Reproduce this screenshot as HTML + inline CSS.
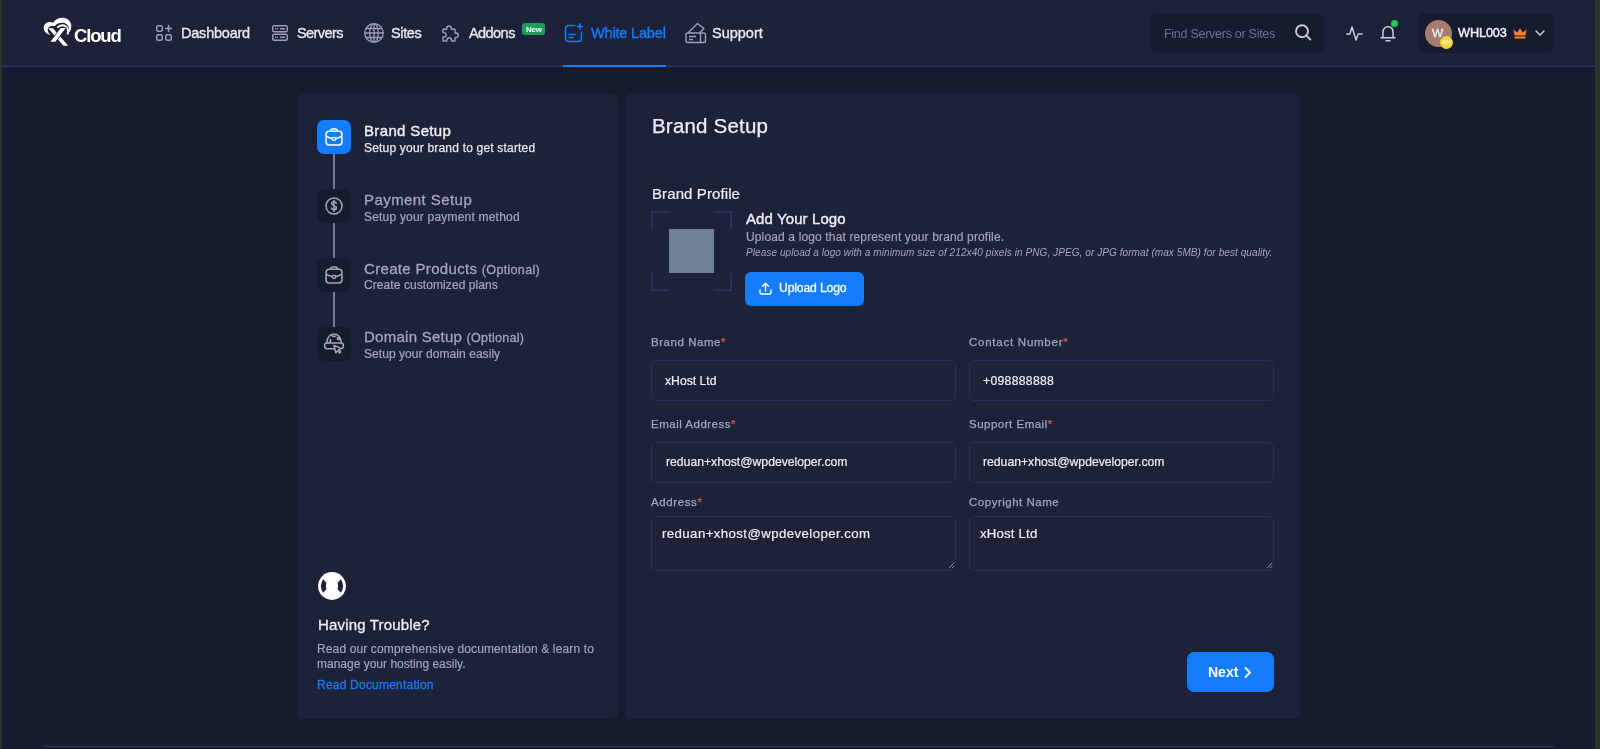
<!DOCTYPE html>
<html><head><meta charset="utf-8"><style>
html,body{margin:0;padding:0;}
body{width:1600px;height:749px;overflow:hidden;position:relative;background:#171b2f;font-family:"Liberation Sans",sans-serif;}
.t{position:absolute;line-height:1;white-space:nowrap;will-change:transform;}
svg{position:absolute;overflow:visible;}
</style></head><body>
<div style="position:absolute;left:0px;top:0px;width:1600px;height:66px;background:#1e2238;"></div>
<div style="position:absolute;left:0px;top:65px;width:1600px;height:1px;background:#232a4e;"></div>
<div style="position:absolute;left:0px;top:66px;width:1600px;height:1px;background:#2b3466;"></div>
<div style="position:absolute;left:563px;top:65px;width:103px;height:2px;background:#147cff;"></div>
<div style="position:absolute;left:0px;top:0px;width:2px;height:749px;background:#2c342e;"></div>
<div style="position:absolute;left:1595px;top:0px;width:5px;height:749px;background:#2c342e;"></div>
<div style="position:absolute;left:44px;top:746px;width:1510px;height:1px;background:#2c3468;"></div>
<svg style="left:40px;top:14px" width="36" height="36" viewBox="0 0 36 36">
<path fill="#fff" d="M10.5 21 C5.5 20 2.8 15.5 4 12 C5 8.5 9.5 6.8 13.2 8.8 C15.5 4.8 20 3.2 24.5 4 C29.5 5 32 9.5 31.2 14 C30.9 16 30 17.5 29 18.5 C30 13.5 27.5 9.2 23 8.8 C19 8.5 16 10.5 14.6 12.2 C12.5 11.8 9.5 12 8.3 13.8 C7 15.8 7.8 18.8 10.5 21 Z"/>
<path fill="none" stroke="#fff" stroke-width="2" d="M17.3 13.6 C19.3 11.6 22.3 10.8 24.8 11.8 C27.4 13 28.6 16.5 27.6 20.4"/>
<path fill="#fff" d="M8.2 14.2 H12.9 L28.2 31.8 H23.5 Z"/>
<path fill="#fff" stroke="#1e2238" stroke-width="1.4" paint-order="stroke" d="M20.8 14.1 H25.6 L15.4 27.8 H10.4 Z"/>
</svg>
<div class="t" style="left:74px;top:26.64px;font-size:18.5px;font-weight:700;color:#ffffff;letter-spacing:-1.15px;">Cloud</div>
<svg style="left:156px;top:25px" width="16" height="16" viewBox="0 0 16 16" fill="none" stroke="#9b9eb3" stroke-width="1.5">
<rect x="0.75" y="0.75" width="5.5" height="5.5" rx="1.5"/><rect x="0.75" y="9.75" width="5.5" height="5.5" rx="1.5"/><rect x="9.75" y="9.75" width="5.5" height="5.5" rx="1.5"/>
<path d="M12.5 0.5 V6.5 M9.5 3.5 H15.5" stroke-linecap="round"/></svg>
<div class="t" style="left:181.25px;top:25.83px;font-size:14.5px;font-weight:400;color:#e6e7ee;letter-spacing:-0.22px;-webkit-text-stroke-width:0.35px;">Dashboard</div>
<svg style="left:272px;top:25px" width="16" height="16" viewBox="0 0 16 16" fill="none" stroke="#9b9eb3" stroke-width="1.4">
<rect x="0.7" y="0.7" width="14.6" height="6" rx="1.5"/><rect x="0.7" y="9.3" width="14.6" height="6" rx="1.5"/>
<path d="M3.5 3.7 h0.1 M5.5 3.7 h0.1 M8.5 3.7 h4 M3.5 12.3 h0.1 M5.5 12.3 h0.1 M8.5 12.3 h4" stroke-linecap="round"/></svg>
<div class="t" style="left:296.5px;top:25.83px;font-size:14.5px;font-weight:400;color:#e6e7ee;letter-spacing:-0.58px;-webkit-text-stroke-width:0.35px;">Servers</div>
<svg style="left:364px;top:23px" width="20" height="20" viewBox="0 0 20 20" fill="none" stroke="#9b9eb3" stroke-width="1.3">
<circle cx="10" cy="10" r="9.3"/><ellipse cx="10" cy="10" rx="4.3" ry="9.3"/><path d="M10 0.7 V19.3 M0.7 10 H19.3 M2 5.5 H18 M2 14.5 H18"/></svg>
<div class="t" style="left:390.6px;top:25.83px;font-size:14.5px;font-weight:400;color:#e6e7ee;letter-spacing:-0.35px;-webkit-text-stroke-width:0.35px;">Sites</div>
<svg style="left:442px;top:25px" width="18" height="17" viewBox="0 0 18 17" fill="none" stroke="#9b9eb3" stroke-width="1.4" stroke-linejoin="round">
<path d="M7 1 C8.5 1 9.3 2 9.3 3.3 V4.3 H13 V8 H14 C15.3 8 16.3 9 16.3 10.3 C16.3 11.6 15.3 12.6 14 12.6 H13 V16 H9.5 V15 C9.5 13.7 8.5 12.8 7.2 12.8 C5.9 12.8 4.9 13.7 4.9 15 V16 H1 V12 H2 C3.3 12 4.2 11 4.2 9.8 C4.2 8.6 3.3 7.6 2 7.6 H1 V4.3 H4.7 V3.3 C4.7 2 5.5 1 7 1 Z"/></svg>
<div class="t" style="left:468.75px;top:25.83px;font-size:14.5px;font-weight:400;color:#e6e7ee;letter-spacing:-0.56px;-webkit-text-stroke-width:0.35px;">Addons</div>
<div style="position:absolute;left:522px;top:23px;width:23px;height:12px;background:#17a05a;border-radius:3px;"></div>
<div class="t" style="left:525.5px;top:25.53px;font-size:8px;font-weight:700;color:#ffffff;letter-spacing:-0.2px;">New</div>
<svg style="left:564px;top:23px" width="20" height="20" viewBox="0 0 20 20" fill="none" stroke="#147cff" stroke-width="1.5" stroke-linecap="round">
<path d="M11 2.5 H5 C2.8 2.5 1.5 3.8 1.5 6 V15 C1.5 17.2 2.8 18.5 5 18.5 H14 C16.2 18.5 17.5 17.2 17.5 15 V9"/>
<path d="M16 0.8 V6 M13.4 3.4 H18.6 M5 11.5 H11 M5 14.5 H9"/></svg>
<div class="t" style="left:590.5px;top:25.83px;font-size:14.5px;font-weight:400;color:#147cff;letter-spacing:-0.17px;-webkit-text-stroke-width:0.35px;">White Label</div>
<svg style="left:685px;top:22px" width="22" height="22" viewBox="0 0 22 22" fill="none" stroke="#9b9eb3" stroke-width="1.4" stroke-linejoin="round">
<path d="M3 11 L12.5 1.5 L19 6.5 L14.5 11"/><path d="M11 6 l0.1 0.1"/>
<rect x="1" y="11" width="19.5" height="9.5" rx="1.8"/><path d="M15.5 11 V20.5 M4 14.5 H11 M4 17.5 H8"/></svg>
<div class="t" style="left:711.8px;top:25.83px;font-size:14.5px;font-weight:400;color:#e6e7ee;-webkit-text-stroke-width:0.35px;">Support</div>
<div style="position:absolute;left:1151px;top:13px;width:173px;height:40px;background:#171b2f;border-radius:7px;"></div>
<div class="t" style="left:1163.75px;top:27.92px;font-size:12.5px;font-weight:400;color:#6d7090;letter-spacing:-0.27px;">Find Servers or Sites</div>
<svg style="left:1295px;top:24px" width="17" height="17" viewBox="0 0 17 17" fill="none" stroke="#c9ccdd" stroke-width="1.9" stroke-linecap="round">
<circle cx="7" cy="7.2" r="6"/><path d="M11.6 11.8 L15.4 15.6"/></svg>
<svg style="left:1346px;top:26px" width="17" height="15" viewBox="0 0 17 15" fill="none" stroke="#c9ccdd" stroke-width="1.5" stroke-linecap="round" stroke-linejoin="round">
<path d="M0.8 8 H3.8 L6 1 L10 14 L12.2 8 H16"/></svg>
<svg style="left:1380px;top:25px" width="16" height="17" viewBox="0 0 16 17" fill="none" stroke="#c9ccdd" stroke-width="1.5" stroke-linecap="round">
<path d="M3 12.5 V7.5 C3 4 5 1.8 8 1.8 C11 1.8 13 4 13 7.5 V12.5 M1 12.8 H15 M6 15.8 H10"/></svg>
<div style="position:absolute;left:1391px;top:20px;width:7px;height:7px;background:#22c560;border-radius:50%;"></div>
<div style="position:absolute;left:1418px;top:13px;width:136px;height:40px;background:#171b2f;border-radius:7px;"></div>
<div style="position:absolute;left:1424.5px;top:20px;width:27px;height:27px;background:#a77c71;border-radius:50%;"></div>
<div class="t" style="left:1432.3px;top:27.51px;font-size:11.8px;font-weight:400;color:#f4f0ee;letter-spacing:-0.3px;-webkit-text-stroke-width:0.3px;">W</div>
<div style="position:absolute;left:1439.5px;top:35.5px;width:13px;height:13px;background:#eed73c;border-radius:50%;"></div>
<div class="t" style="left:1441.5px;top:39.84px;font-size:5.5px;font-weight:700;color:#f8f0b0;">RM</div>
<div class="t" style="left:1458.2px;top:26.95px;font-size:12.7px;font-weight:400;color:#eceef4;letter-spacing:-0.1px;-webkit-text-stroke-width:0.45px;">WHL003</div>
<svg style="left:1513px;top:28px" width="14" height="11" viewBox="0 0 14 11" fill="#f5822a">
<path d="M0.5 1.5 L4 4.5 L7 0.5 L10 4.5 L13.5 1.5 L12.5 7.5 H1.5 Z"/><rect x="1.5" y="8.5" width="11" height="2"/></svg>
<svg style="left:1535px;top:30px" width="10" height="7" viewBox="0 0 10 7" fill="none" stroke="#c9ccdd" stroke-width="1.5" stroke-linecap="round" stroke-linejoin="round">
<path d="M1 1 L5 5 L9 1"/></svg>
<div style="position:absolute;left:297px;top:94px;width:321px;height:625px;background:#1e2238;border-radius:6px;"></div>
<div style="position:absolute;left:624.5px;top:94px;width:675.5px;height:625px;background:#1e2238;border-radius:6px;"></div>
<div style="position:absolute;left:333.2px;top:154px;width:2px;height:35px;background:#767990;"></div>
<div style="position:absolute;left:333.2px;top:223px;width:2px;height:35px;background:#767990;"></div>
<div style="position:absolute;left:333.2px;top:291px;width:2px;height:36px;background:#767990;"></div>
<div style="position:absolute;left:317px;top:120px;width:34px;height:34px;background:#147cff;border-radius:7px;"></div>
<div style="position:absolute;left:317px;top:189px;width:34px;height:34px;background:#171b2f;border-radius:7px;"></div>
<div style="position:absolute;left:317px;top:258px;width:34px;height:34px;background:#171b2f;border-radius:7px;"></div>
<div style="position:absolute;left:317px;top:327px;width:34px;height:34px;background:#171b2f;border-radius:7px;"></div>
<svg style="left:325px;top:128px" width="18" height="18" viewBox="0 0 18 18" fill="none" stroke="#ffffff" stroke-width="1.5" stroke-linejoin="round">
<path d="M5.8 3.2 V2.2 C5.8 1.3 6.4 0.9 7.3 0.9 H10.7 C11.6 0.9 12.2 1.3 12.2 2.2 V3.2"/>
<path d="M4 3.3 H14 C15.7 3.3 16.9 4.5 16.9 6.2 V14 C16.9 15.7 15.7 16.9 14 16.9 H4 C2.3 16.9 1.1 15.7 1.1 14 V6.2 C1.1 4.5 2.3 3.3 4 3.3 Z"/>
<path d="M1.3 8.2 C3.5 9.6 5.4 10.3 7.2 10.6 M10.8 10.6 C12.6 10.3 14.5 9.6 16.7 8.2"/>
<rect x="7.2" y="9.4" width="3.6" height="2.9" rx="1.4"/></svg>
<div class="t" style="left:364px;top:122.60px;font-size:15px;font-weight:500;color:#eceef4;letter-spacing:0.35px;-webkit-text-stroke-width:0.4px;">Brand Setup</div>
<div class="t" style="left:364px;top:141.84px;font-size:12px;font-weight:400;color:#e4e5ec;letter-spacing:0.19px;-webkit-text-stroke-width:0.25px;">Setup your brand to get started</div>
<svg style="left:325px;top:197px" width="18" height="18" viewBox="0 0 18 18" fill="none" stroke="#a4a7bb" stroke-width="1.5">
<circle cx="9" cy="9" r="8"/><path d="M11.3 6.3 C11 5.3 10.1 4.8 9 4.8 C7.7 4.8 6.7 5.5 6.7 6.6 C6.7 9 11.4 8 11.4 10.8 C11.4 12 10.4 12.7 9 12.7 C7.7 12.7 6.8 12.1 6.6 11.1 M9 3.5 V14.5" stroke-linecap="round"/></svg>
<div class="t" style="left:364.4px;top:191.70px;font-size:15px;font-weight:400;color:#a4a7bb;letter-spacing:0.43px;-webkit-text-stroke-width:0.28px;">Payment Setup</div>
<div class="t" style="left:364px;top:210.84px;font-size:12px;font-weight:400;color:#a4a7bb;letter-spacing:0.2px;-webkit-text-stroke-width:0.2px;">Setup your payment method</div>
<svg style="left:325px;top:266px" width="18" height="18" viewBox="0 0 18 18" fill="none" stroke="#a4a7bb" stroke-width="1.5" stroke-linejoin="round">
<path d="M5.8 3.2 V2.2 C5.8 1.3 6.4 0.9 7.3 0.9 H10.7 C11.6 0.9 12.2 1.3 12.2 2.2 V3.2"/>
<path d="M4 3.3 H14 C15.7 3.3 16.9 4.5 16.9 6.2 V14 C16.9 15.7 15.7 16.9 14 16.9 H4 C2.3 16.9 1.1 15.7 1.1 14 V6.2 C1.1 4.5 2.3 3.3 4 3.3 Z"/>
<path d="M1.3 8.2 C3.5 9.6 5.4 10.3 7.2 10.6 M10.8 10.6 C12.6 10.3 14.5 9.6 16.7 8.2"/>
<rect x="7.2" y="9.4" width="3.6" height="2.9" rx="1.4"/></svg>
<div class="t" style="left:364px;top:260.70px;font-size:15px;font-weight:400;color:#a4a7bb;letter-spacing:0.33px;-webkit-text-stroke-width:0.28px;">Create Products <span style="font-size:12.5px">(Optional)</span></div>
<div class="t" style="left:364px;top:279.14px;font-size:12px;font-weight:400;color:#a4a7bb;letter-spacing:0.08px;-webkit-text-stroke-width:0.2px;">Create customized plans</div>
<svg style="left:322px;top:333px" width="24" height="22" viewBox="0 0 24 22" fill="none" stroke="#a4a7bb" stroke-width="1.5" stroke-linejoin="round" stroke-linecap="round">
<path d="M4.8 9.8 C4.8 4.5 8 0.9 12 0.9 C16 0.9 19.2 4.5 19.2 9.8"/>
<path d="M6.8 9.6 C8.6 9 9.2 7.8 8.2 6.6 M10 2.2 C10.5 3.6 12.5 4 13.8 3"/><circle cx="16.6" cy="5.4" r="1.2"/>
<rect x="2.6" y="9.9" width="18.8" height="5.8" rx="2.6"/>
<path d="M12 12.4 L13.8 19.8 L15.4 17.8 L17.6 20 L18.8 18.8 L16.6 16.6 L18.6 15.1 Z" fill="#171b2f"/></svg>
<div class="t" style="left:364px;top:329.20px;font-size:15px;font-weight:400;color:#a4a7bb;letter-spacing:0.26px;-webkit-text-stroke-width:0.28px;">Domain Setup <span style="font-size:12.5px">(Optional)</span></div>
<div class="t" style="left:364px;top:348.04px;font-size:12px;font-weight:400;color:#a4a7bb;letter-spacing:0.06px;-webkit-text-stroke-width:0.2px;">Setup your domain easily</div>
<svg style="left:318.3px;top:572px" width="28" height="28" viewBox="0 0 28 28">
<circle cx="14" cy="14" r="13.9" fill="#fff"/>
<path d="M5.2 7.2 A11.1 11.1 0 0 0 5.2 20.8 L8.4 17.2 C7.9 15.5 7.9 12.5 8.4 10.8 Z" fill="#1e2238"/>
<path d="M22.8 7.2 A11.1 11.1 0 0 1 22.8 20.8 L19.6 17.2 C20.1 15.5 20.1 12.5 19.6 10.8 Z" fill="#1e2238"/>
</svg>
<div class="t" style="left:317.5px;top:616.90px;font-size:15px;font-weight:500;color:#eceef4;letter-spacing:0.17px;-webkit-text-stroke-width:0.3px;">Having Trouble?</div>
<div class="t" style="left:317.2px;top:643.04px;font-size:12px;font-weight:400;color:#a4a7bb;letter-spacing:0.13px;-webkit-text-stroke-width:0.15px;">Read our comprehensive documentation &amp; learn to</div>
<div class="t" style="left:317.2px;top:658.04px;font-size:12px;font-weight:400;color:#a4a7bb;-webkit-text-stroke-width:0.15px;">manage your hosting easily.</div>
<div class="t" style="left:317.2px;top:678.64px;font-size:12px;font-weight:400;color:#147cff;letter-spacing:0.22px;-webkit-text-stroke-width:0.3px;">Read Documentation</div>
<div class="t" style="left:652.2px;top:115.65px;font-size:20.5px;font-weight:400;color:#eceef4;letter-spacing:0.2px;-webkit-text-stroke-width:0.25px;">Brand Setup</div>
<div class="t" style="left:651.5px;top:186.20px;font-size:15px;font-weight:400;color:#eceef4;letter-spacing:0.1px;-webkit-text-stroke-width:0.2px;">Brand Profile</div>
<svg style="left:651px;top:211px" width="81" height="80" viewBox="0 0 81 80" fill="none" stroke="#2b3268" stroke-width="1.5">
<path d="M0.75 18 V0.75 H18.5 M62.5 0.75 H80.25 V18 M80.25 62 V79.25 H62.5 M18.5 79.25 H0.75 V62"/></svg>
<div style="position:absolute;left:669px;top:229px;width:45px;height:44px;background:#6c8394;"></div>
<div class="t" style="left:745.6px;top:211.20px;font-size:15px;font-weight:500;color:#eceef4;letter-spacing:0.1px;-webkit-text-stroke-width:0.4px;">Add Your Logo</div>
<div class="t" style="left:745.6px;top:230.74px;font-size:12px;font-weight:400;color:#a4a7bb;letter-spacing:0.14px;-webkit-text-stroke-width:0.15px;">Upload a logo that represent your brand profile.</div>
<div class="t" style="left:745.6px;top:247.53px;font-size:10px;font-weight:400;color:#a4a7bb;letter-spacing:0.08px;font-style:italic;">Please upload a logo with a minimum size of 212x40 pixels in PNG, JPEG, or JPG format (max 5MB) for best quality.</div>
<div style="position:absolute;left:745px;top:272px;width:119px;height:34px;background:#147cff;border-radius:6px;"></div>
<svg style="left:759px;top:282px" width="13" height="13" viewBox="0 0 13 13" fill="none" stroke="#fff" stroke-width="1.4" stroke-linecap="round" stroke-linejoin="round">
<path d="M1 8 V10.5 C1 11.3 1.7 12 2.5 12 H10.5 C11.3 12 12 11.3 12 10.5 V8 M6.5 9 V1.5 M3.5 4.3 L6.5 1.3 L9.5 4.3"/></svg>
<div class="t" style="left:779px;top:282.17px;font-size:12.2px;font-weight:400;color:#ffffff;letter-spacing:-0.15px;-webkit-text-stroke-width:0.3px;">Upload Logo</div>
<div class="t" style="left:651px;top:337.07px;font-size:11.5px;font-weight:400;color:#a4a7bb;letter-spacing:0.55px;-webkit-text-stroke-width:0.25px;">Brand Name<span style="color:#e8553f">*</span></div>
<div style="position:absolute;left:651px;top:360px;width:305px;height:41px;box-sizing:border-box;border:1px solid #292e5a;border-radius:5px;"></div>
<div class="t" style="left:665px;top:375.07px;font-size:12.2px;font-weight:400;color:#eceef4;letter-spacing:0px;-webkit-text-stroke-width:0.2px;">xHost Ltd</div>
<div class="t" style="left:969px;top:337.07px;font-size:11.5px;font-weight:400;color:#a4a7bb;letter-spacing:0.75px;-webkit-text-stroke-width:0.25px;">Contact Number<span style="color:#e8553f">*</span></div>
<div style="position:absolute;left:969px;top:360px;width:305px;height:41px;box-sizing:border-box;border:1px solid #292e5a;border-radius:5px;"></div>
<div class="t" style="left:983px;top:375.07px;font-size:12.2px;font-weight:400;color:#eceef4;letter-spacing:0.3px;-webkit-text-stroke-width:0.2px;">+098888888</div>
<div class="t" style="left:651px;top:418.67px;font-size:11.5px;font-weight:400;color:#a4a7bb;letter-spacing:0.5px;-webkit-text-stroke-width:0.25px;">Email Address<span style="color:#e8553f">*</span></div>
<div style="position:absolute;left:651px;top:442px;width:305px;height:41px;box-sizing:border-box;border:1px solid #292e5a;border-radius:5px;"></div>
<div class="t" style="left:665.5px;top:456.17px;font-size:12.2px;font-weight:400;color:#eceef4;letter-spacing:0px;-webkit-text-stroke-width:0.2px;">reduan+xhost@wpdeveloper.com</div>
<div class="t" style="left:969px;top:418.67px;font-size:11.5px;font-weight:400;color:#a4a7bb;letter-spacing:0.5px;-webkit-text-stroke-width:0.25px;">Support Email<span style="color:#e8553f">*</span></div>
<div style="position:absolute;left:969px;top:442px;width:305px;height:41px;box-sizing:border-box;border:1px solid #292e5a;border-radius:5px;"></div>
<div class="t" style="left:983px;top:456.17px;font-size:12.2px;font-weight:400;color:#eceef4;letter-spacing:0px;-webkit-text-stroke-width:0.2px;">reduan+xhost@wpdeveloper.com</div>
<div class="t" style="left:651px;top:496.67px;font-size:11.5px;font-weight:400;color:#a4a7bb;letter-spacing:0.6px;-webkit-text-stroke-width:0.25px;">Address<span style="color:#e8553f">*</span></div>
<div style="position:absolute;left:651px;top:516px;width:305px;height:55px;box-sizing:border-box;border:1px solid #292e5a;border-radius:5px;"></div>
<div class="t" style="left:662.4px;top:527.33px;font-size:13.2px;font-weight:400;color:#eceef4;letter-spacing:0.43px;-webkit-text-stroke-width:0.2px;">reduan+xhost@wpdeveloper.com</div>
<svg style="left:948px;top:562px" width="7" height="7" viewBox="0 0 7 7" stroke="#8c8fa6" stroke-width="1"><path d="M1 6 L6 1 M4 6 L6 4"/></svg>
<div class="t" style="left:969px;top:496.67px;font-size:11.5px;font-weight:400;color:#a4a7bb;letter-spacing:0.51px;-webkit-text-stroke-width:0.25px;">Copyright Name</div>
<div style="position:absolute;left:969px;top:516px;width:305px;height:55px;box-sizing:border-box;border:1px solid #292e5a;border-radius:5px;"></div>
<div class="t" style="left:980px;top:527.33px;font-size:13.2px;font-weight:400;color:#eceef4;letter-spacing:0.2px;-webkit-text-stroke-width:0.2px;">xHost Ltd</div>
<svg style="left:1266px;top:562px" width="7" height="7" viewBox="0 0 7 7" stroke="#8c8fa6" stroke-width="1"><path d="M1 6 L6 1 M4 6 L6 4"/></svg>
<div style="position:absolute;left:1187px;top:652px;width:87px;height:40px;background:#147cff;border-radius:7px;"></div>
<div class="t" style="left:1208px;top:664.85px;font-size:14px;font-weight:700;color:#ffffff;">Next</div>
<svg style="left:1244px;top:667px" width="8" height="11" viewBox="0 0 8 11" fill="none" stroke="#fff" stroke-width="1.8" stroke-linecap="round" stroke-linejoin="round"><path d="M1.5 1 L6 5.5 L1.5 10"/></svg>
</body></html>
